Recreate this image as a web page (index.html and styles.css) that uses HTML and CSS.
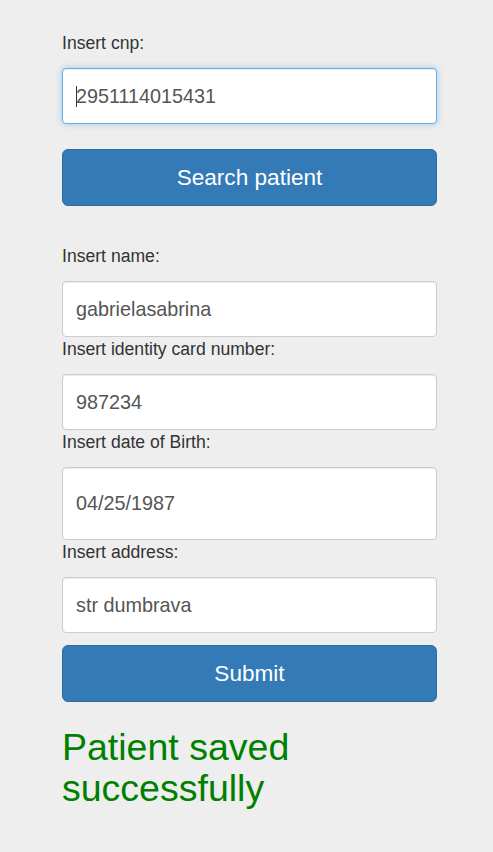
FILE: index.html
```html
<!DOCTYPE html>
<html>
<head>
<meta charset="utf-8">
<link rel="stylesheet" href="styles.css">
</head>
<body>
<main class="page">
  <form class="form">
    <label class="label">Insert cnp:</label>
    <div class="field-wrap">
      <input class="input input--focus" type="text" value="2951114015431">
      <span class="caret"></span>
    </div>
    <button type="button" class="btn btn--search">Search patient</button>

    <label class="label label--section">Insert name:</label>
    <input class="input" type="text" value="gabrielasabrina">
    <label class="label">Insert identity card number:</label>
    <input class="input" type="text" value="987234">
    <label class="label">Insert date of Birth:</label>
    <input class="input input--date" type="text" value="04/25/1987">
    <label class="label">Insert address:</label>
    <input class="input" type="text" value="str dumbrava">
    <button type="button" class="btn btn--submit">Submit</button>
  </form>
  <h1 class="message">Patient saved successfully</h1>
</main>
</body>
</html>
```
FILE: styles.css
```css
html, body {
  margin: 0;
  padding: 0;
  background: #eeeeee;
}
body {
  font-family: "Liberation Sans", Arial, sans-serif;
  color: #333333;
}
.page {
  padding: 31px 0 0 62px;
  width: 375px;
}
.form {
  display: flex;
  flex-direction: column;
}
.label {
  display: block;
  font-size: 17.6px;
  line-height: 24px;
  margin-bottom: 13px;
  color: #333333;
}
.label--section {
  margin-top: 38px;
}
.field-wrap {
  position: relative;
  display: flex;
}
.input {
  box-sizing: border-box;
  width: 375px;
  height: 56px;
  margin: 0;
  padding: 0 13px;
  border: 1px solid #cccccc;
  border-radius: 4px;
  background: #ffffff;
  font-family: "Liberation Sans", Arial, sans-serif;
  font-size: 19.8px;
  color: #555555;
  box-shadow: inset 0 1px 1px rgba(0, 0, 0, 0.075);
  outline: none;
}
.input--focus {
  border-color: #66afe9;
  box-shadow: inset 0 1px 1px rgba(0, 0, 0, 0.075), 0 0 6px rgba(102, 175, 233, 0.6);
}
.input--date {
  height: 73px;
}
.caret {
  position: absolute;
  left: 14px;
  top: 18px;
  width: 1px;
  height: 21px;
  background: #333333;
}
.btn {
  box-sizing: border-box;
  width: 375px;
  height: 57px;
  border: 1px solid #2e6da4;
  border-radius: 6px;
  background: #337ab7;
  color: #ffffff;
  font-family: "Liberation Sans", Arial, sans-serif;
  font-size: 22.6px;
  padding: 0;
  cursor: pointer;
}
.btn--search {
  margin-top: 25px;
}
.btn--submit {
  margin-top: 12px;
}
.message {
  margin: 25px 0 0 0;
  font-size: 37.5px;
  line-height: 41px;
  font-weight: normal;
  color: #008000;
}
```
